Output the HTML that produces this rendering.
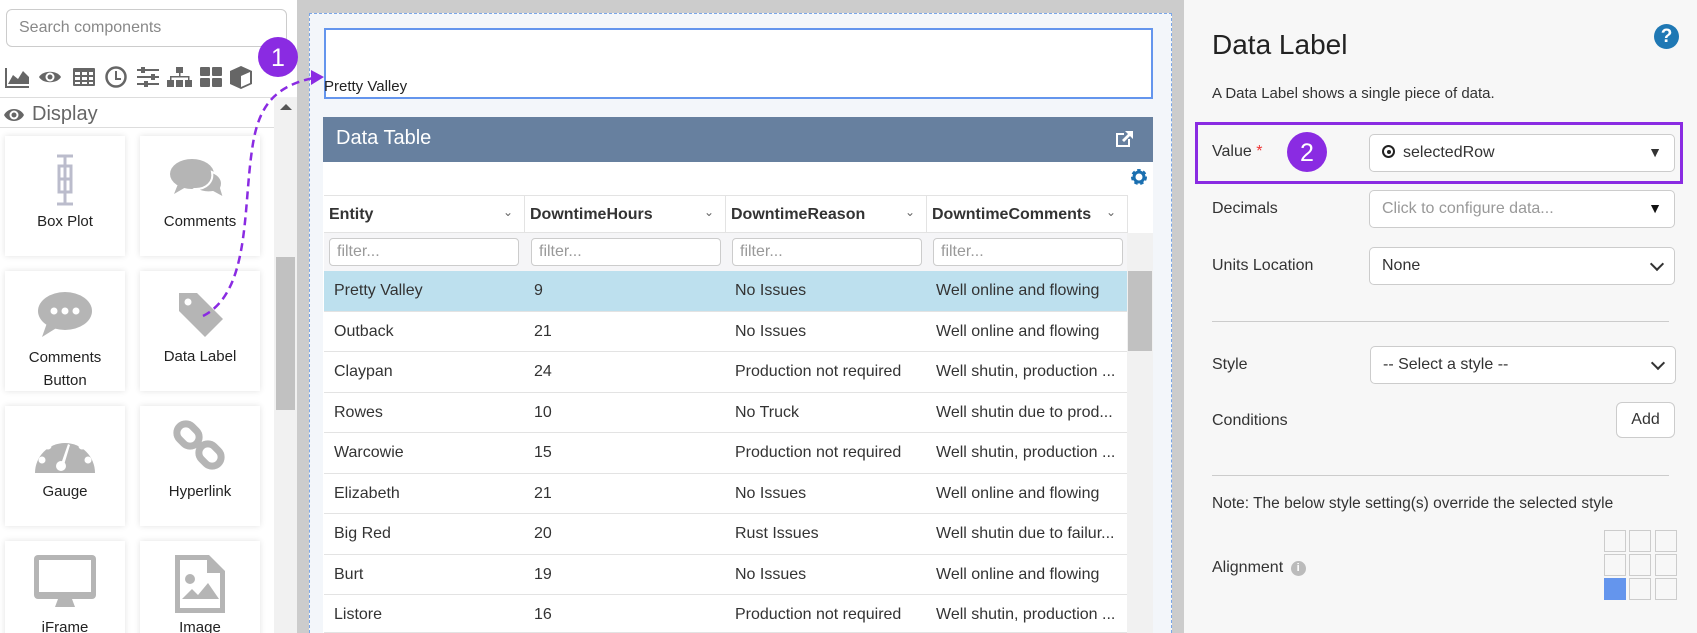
<!DOCTYPE html>
<html style="width:1697px;height:633px;overflow:hidden"><head><meta charset="utf-8"><style>
*{box-sizing:border-box;margin:0;padding:0}
body{width:1697px;height:633px;overflow:hidden;position:relative;font-family:"Liberation Sans",sans-serif;background:#ccc;color:#333}
.abs{position:absolute}
#left{left:0;top:0;width:297px;height:633px;background:#fff;overflow:hidden}
.tile{position:absolute;width:120px;height:120px;background:#fff;box-shadow:0 0 6px rgba(0,0,0,.12);text-align:center;font-size:15px;color:#222}
.tile .lb{position:absolute;left:0;right:0;top:74px;line-height:23px}
.tile svg{position:absolute;left:35px;top:18px}
#canvas{left:309px;top:13px;width:863px;height:620px;border:1px dashed #7aa6e8;border-bottom:none;background:#f3f6fa}
.row{position:absolute;left:324px;width:803px;height:40.5px;border-bottom:1px solid #e3e3e3;background:#fff;font-size:16px;color:#333}
.row span{position:absolute;top:11px;white-space:nowrap}
#right{left:1184px;top:0;width:513px;height:633px;background:#f7f7f7}
.lab{position:absolute;left:28px;font-size:16px;color:#333}
.sel{position:absolute;left:185px;width:306px;height:38px;background:#fff;border:1px solid #ccc;border-radius:5px;font-size:16px;padding:9px 12px;color:#333}
.sel .ar{position:absolute;right:12px;top:9px;font-size:14px}
.chev{position:absolute;right:12px;top:11px;width:10px;height:10px;border-right:2px solid #333;border-bottom:2px solid #333;transform:rotate(45deg)}
.fi{position:absolute;top:238px;height:28px;border:1px solid #ccc;border-radius:4px;background:#fff;font-size:16px;color:#999;padding:4px 7px}
.hd{position:absolute;top:206px;font-size:16px;font-weight:bold;color:#333}
.sc{position:absolute;top:205px;font-size:12px;color:#666}
.g{position:absolute;width:22px;height:22px;border:1px solid #ccc;background:#f7f7f7}
</style></head><body>

<div id="left" class="abs">
  <div class="abs" style="left:6px;top:9px;width:281px;height:38px;border:1px solid #ccc;border-radius:6px;font-size:16px;color:#888;padding:9px 12px">Search components</div>
  <svg class="abs" style="left:3px;top:64px" width="260" height="26" viewBox="0 0 260 26" fill="#666">
    <path d="M2 4v20h24v-2H4V4z M5 20 l5-9 5 4 5-8 6 6v7H5z"/>
    <path d="M36 13c4-7 18-7 22 0c-4 7-18 7-22 0z" /><circle cx="47" cy="13" r="4.5" fill="#fff"/><circle cx="47" cy="13" r="2.5"/>
    <rect x="70" y="4" width="22" height="18" rx="1"/><g fill="#fff"><rect x="72" y="8" width="5" height="3"/><rect x="79" y="8" width="5" height="3"/><rect x="86" y="8" width="4" height="3"/><rect x="72" y="13" width="5" height="3"/><rect x="79" y="13" width="5" height="3"/><rect x="86" y="13" width="4" height="3"/><rect x="72" y="18" width="5" height="2"/><rect x="79" y="18" width="5" height="2"/><rect x="86" y="18" width="4" height="2"/></g>
    <circle cx="113" cy="13" r="9.5" fill="none" stroke="#666" stroke-width="2.5"/><path d="M112 7h2v7h4v2h-6z"/>
    <rect x="134" y="5" width="22" height="2"/><rect x="134" y="12" width="22" height="2"/><rect x="134" y="19" width="22" height="2"/><rect x="138" y="3" width="4" height="6"/><rect x="148" y="10" width="4" height="6"/><rect x="141" y="17" width="4" height="6"/>
    <rect x="173" y="3" width="7" height="6"/><rect x="176" y="9" width="1.5" height="4"/><rect x="167" y="12" width="19" height="1.5"/><rect x="167" y="12" width="1.5" height="5"/><rect x="185" y="12" width="1.5" height="5"/><rect x="164" y="16" width="7" height="7"/><rect x="173" y="16" width="7" height="7"/><rect x="182" y="16" width="7" height="7"/>
    <rect x="197" y="3" width="10" height="9" rx="1"/><rect x="209" y="3" width="10" height="9" rx="1"/><rect x="197" y="14" width="10" height="9" rx="1"/><rect x="209" y="14" width="10" height="9" rx="1"/>
    <path d="M238 2l11 5v13l-11 5-11-5V7z"/><path d="M238 12l9-4v11l-9 4z M229 8l9 4" fill="#fff"/>
  </svg>
  <div class="abs" style="left:0;top:97px;width:274px;height:1px;background:#ddd"></div>
  <div class="abs" style="left:0;top:127px;width:274px;height:1px;background:#ddd"></div>
  <svg class="abs" style="left:3px;top:106px" width="22" height="18" viewBox="0 0 22 18"><path d="M1 9c4-8 16-8 20 0c-4 8-16 8-20 0z" fill="#666"/><circle cx="11" cy="9" r="4.5" fill="#fff"/><circle cx="11" cy="9" r="2.5" fill="#666"/></svg>
  <div class="abs" style="left:32px;top:103px;font-size:20px;color:#666">Display</div>
  <div class="abs" style="left:274px;top:97px;width:23px;height:536px;background:#f1f1f1"></div>
  <div class="abs" style="left:280px;top:104px;width:0;height:0;border-left:6px solid transparent;border-right:6px solid transparent;border-bottom:6px solid #555"></div>
  <div class="abs" style="left:276px;top:257px;width:19px;height:153px;background:#c1c1c1"></div>

  <div class="tile" style="left:5px;top:136px"><svg width="50" height="52" viewBox="0 0 50 52"><g fill="none" stroke="#bbbccc" stroke-width="3"><path d="M17 2h16M25 2v48M17 50h16"/><rect x="19" y="12" width="12" height="26"/><path d="M19 25h12"/></g></svg><div class="lb">Box Plot</div></div>
  <div class="tile" style="left:140px;top:136px"><svg width="60" height="52" viewBox="0 0 60 52" style="left:28px"><ellipse cx="24" cy="20" rx="22" ry="15" fill="#b5b5b5"/><path d="M10 30l-4 10 12-7z" fill="#b5b5b5"/><path d="M44 18c8 3 12 9 9 16l3 10-11-6c-6 1-12 0-17-3 10 0 18-7 16-17z" fill="#b5b5b5" stroke="#fff" stroke-width="2"/></svg><div class="lb">Comments</div></div>
  <div class="tile" style="left:5px;top:271px"><svg width="60" height="52" viewBox="0 0 60 52" style="left:30px"><ellipse cx="30" cy="22" rx="27" ry="19" fill="#b5b5b5"/><path d="M12 34l-5 14 16-10z" fill="#b5b5b5"/><circle cx="19" cy="22" r="3.5" fill="#fff"/><circle cx="30" cy="22" r="3.5" fill="#fff"/><circle cx="41" cy="22" r="3.5" fill="#fff"/></svg><div class="lb" style="top:75px">Comments<br>Button</div></div>
  <div class="tile" style="left:140px;top:271px"><svg width="52" height="52" viewBox="0 0 52 52"><path d="M4 4h18l26 26-18 18L4 22z" fill="#b5b5b5"/><circle cx="13" cy="13" r="3.5" fill="#fff"/></svg><div class="lb">Data Label</div></div>
  <div class="tile" style="left:5px;top:406px"><svg width="62" height="44" viewBox="0 0 62 44" style="left:29px;top:24px"><path d="M1 43A30 30 0 0 1 61 43z" fill="#b5b5b5"/><g fill="#fff"><circle cx="31" cy="9" r="3.5"/><circle cx="14" cy="16" r="3.5"/><circle cx="48" cy="16" r="3.5"/><circle cx="8" cy="30" r="3.5"/><circle cx="54" cy="30" r="3.5"/><circle cx="27" cy="36" r="5"/><path d="M34 14l2 1-6 20-3-1z"/></g></svg><div class="lb">Gauge</div></div>
  <div class="tile" style="left:140px;top:406px"><svg width="58" height="52" viewBox="0 0 58 52" style="left:32px;top:14px"><g fill="none" stroke="#b5b5b5" stroke-width="7"><rect x="4" y="6" width="24" height="18" rx="9" transform="rotate(45 16 15)"/><rect x="26" y="26" width="24" height="18" rx="9" transform="rotate(45 38 35)"/></g></svg><div class="lb">Hyperlink</div></div>
  <div class="tile" style="left:5px;top:541px"><svg width="66" height="56" viewBox="0 0 66 56" style="left:27px;top:12px"><rect x="2" y="2" width="62" height="44" rx="4" fill="#b5b5b5"/><rect x="7" y="7" width="52" height="32" fill="#fff"/><path d="M26 46h14l3 8H23z" fill="#b5b5b5"/></svg><div class="lb" style="top:75px">iFrame</div></div>
  <div class="tile" style="left:140px;top:541px"><svg width="54" height="62" viewBox="0 0 54 62" style="left:33px;top:12px"><path d="M2 2h34l16 16v42H2z" fill="#b5b5b5"/><path d="M7 7h27v13h13v35H7z" fill="#fff"/><circle cx="17" cy="26" r="5" fill="#b5b5b5"/><path d="M9 46l10-10 6 6 10-12 11 16z" fill="#b5b5b5"/></svg><div class="lb" style="top:75px">Image</div></div>
</div>

<div id="canvas" class="abs"></div>
<div class="abs" style="left:324px;top:28px;width:829px;height:71px;background:#fff;border:2px solid #6495ed"></div>
<div class="abs" style="left:324px;top:78px;font-size:15px;color:#222">Pretty Valley</div>

<div class="abs" style="left:323px;top:117px;width:830px;height:45px;background:#67809f"></div>
<div class="abs" style="left:336px;top:127px;font-size:20px;color:#fff">Data Table</div>
<svg class="abs" style="left:1113px;top:129px" width="22" height="20" viewBox="0 0 22 20"><path d="M3 4h8v2H5v10h10v-6h2v8H3z" fill="#fff"/><path d="M12 2h8v8l-3-3-6 6-2-2 6-6z" fill="#fff"/></svg>
<div class="abs" style="left:323px;top:162px;width:830px;height:471px;background:#fff"></div>
<svg class="abs" style="left:1130px;top:168px" width="18" height="18" viewBox="0 0 18 18"><circle cx="9" cy="9" r="6" fill="none" stroke="#1a6fb0" stroke-width="4" stroke-dasharray="3 2.3"/><circle cx="9" cy="9" r="5" fill="none" stroke="#1a6fb0" stroke-width="3"/></svg>
<div class="abs" style="left:324px;top:195px;width:803px;height:38px;border-top:1px solid #e3e3e3;border-bottom:1px solid #e3e3e3;background:#fff"></div>
<div class="abs" style="left:524px;top:195px;width:1px;height:38px;background:#e3e3e3"></div>
<div class="abs" style="left:725px;top:195px;width:1px;height:38px;background:#e3e3e3"></div>
<div class="abs" style="left:926px;top:195px;width:1px;height:38px;background:#e3e3e3"></div>
<div class="abs" style="left:1127px;top:195px;width:1px;height:38px;background:#e3e3e3"></div>
<div class="hd" style="left:329px">Entity</div><div class="sc" style="left:503px">&#8964;</div>
<div class="hd" style="left:530px">DowntimeHours</div><div class="sc" style="left:704px">&#8964;</div>
<div class="hd" style="left:731px">DowntimeReason</div><div class="sc" style="left:905px">&#8964;</div>
<div class="hd" style="left:932px">DowntimeComments</div><div class="sc" style="left:1106px">&#8964;</div>
<div class="abs" style="left:324px;top:233px;width:803px;height:38px;background:#f5f5f7"></div>
<div class="fi" style="left:329px;width:190px">filter...</div>
<div class="fi" style="left:531px;width:190px">filter...</div>
<div class="fi" style="left:732px;width:190px">filter...</div>
<div class="fi" style="left:933px;width:190px">filter...</div>
<div class="abs" style="left:1127px;top:233px;width:26px;height:400px;background:#f1f1f1"></div>
<div class="abs" style="left:1128px;top:271px;width:24px;height:80px;background:#c1c1c1"></div>

<div class="row" style="top:271px;background:#bde0ee"><span style="left:10px">Pretty Valley</span><span style="left:210px">9</span><span style="left:411px">No Issues</span><span style="left:612px">Well online and flowing</span></div>
<div class="row" style="top:311.5px"><span style="left:10px">Outback</span><span style="left:210px">21</span><span style="left:411px">No Issues</span><span style="left:612px">Well online and flowing</span></div>
<div class="row" style="top:352px"><span style="left:10px">Claypan</span><span style="left:210px">24</span><span style="left:411px">Production not required</span><span style="left:612px">Well shutin, production ...</span></div>
<div class="row" style="top:392.5px"><span style="left:10px">Rowes</span><span style="left:210px">10</span><span style="left:411px">No Truck</span><span style="left:612px">Well shutin due to prod...</span></div>
<div class="row" style="top:433px"><span style="left:10px">Warcowie</span><span style="left:210px">15</span><span style="left:411px">Production not required</span><span style="left:612px">Well shutin, production ...</span></div>
<div class="row" style="top:473.5px"><span style="left:10px">Elizabeth</span><span style="left:210px">21</span><span style="left:411px">No Issues</span><span style="left:612px">Well online and flowing</span></div>
<div class="row" style="top:514px"><span style="left:10px">Big Red</span><span style="left:210px">20</span><span style="left:411px">Rust Issues</span><span style="left:612px">Well shutin due to failur...</span></div>
<div class="row" style="top:554.5px"><span style="left:10px">Burt</span><span style="left:210px">19</span><span style="left:411px">No Issues</span><span style="left:612px">Well online and flowing</span></div>
<div class="row" style="top:595px;height:38px"><span style="left:10px">Listore</span><span style="left:210px">16</span><span style="left:411px">Production not required</span><span style="left:612px">Well shutin, production ...</span></div>

<div id="right" class="abs">
  <div class="abs" style="left:28px;top:29px;font-size:28px;color:#222">Data Label</div>
  <div class="abs" style="left:470px;top:24px;width:25px;height:25px;border-radius:50%;background:#1f78b4;color:#fff;font-weight:bold;font-size:19px;text-align:center;line-height:25px">?</div>
  <div class="lab" style="top:85px;font-size:15px">A Data Label shows a single piece of data.</div>
  <div class="abs" style="left:11px;top:122px;width:488px;height:62px;border:3px solid #8a2be2"></div>
  <div class="lab" style="top:143px">Value <span style="color:#e33">*</span></div>
  <div class="sel" style="top:134px"><span style="display:inline-block;width:13px;height:13px;border:2px solid #222;border-radius:50%;vertical-align:-1px;position:relative;margin-right:8px"><span style="position:absolute;left:2.5px;top:2.5px;width:4px;height:4px;border-radius:50%;background:#222"></span></span>selectedRow<span class="ar">&#9660;</span></div>
  <div class="lab" style="top:200px">Decimals</div>
  <div class="sel" style="top:190px;color:#999">Click to configure data...<span class="ar" style="color:#111">&#9660;</span></div>
  <div class="lab" style="top:257px">Units Location</div>
  <div class="sel" style="top:247px">None<span class="chev"></span></div>
  <div class="abs" style="left:28px;top:321px;width:457px;height:1px;background:#ccc"></div>
  <div class="lab" style="top:356px">Style</div>
  <div class="sel" style="top:346px;left:186px">-- Select a style --<span class="chev"></span></div>
  <div class="lab" style="top:412px">Conditions</div>
  <div class="abs" style="left:432px;top:402px;width:59px;height:36px;background:#fff;border:1px solid #ccc;border-radius:6px;font-size:16px;text-align:center;line-height:34px">Add</div>
  <div class="abs" style="left:28px;top:475px;width:457px;height:1px;background:#ccc"></div>
  <div class="lab" style="top:495px;font-size:15.5px">Note: The below style setting(s) override the selected style</div>
  <div class="lab" style="top:559px">Alignment <span style="display:inline-block;width:15px;height:15px;border-radius:50%;background:#bbb;color:#fff;font-size:11px;font-weight:bold;text-align:center;line-height:15px;vertical-align:1px;margin-left:3px">i</span></div>
  <div class="g" style="left:420px;top:530px"></div><div class="g" style="left:445px;top:530px"></div><div class="g" style="left:471px;top:530px"></div>
  <div class="g" style="left:420px;top:554px"></div><div class="g" style="left:445px;top:554px"></div><div class="g" style="left:471px;top:554px"></div>
  <div class="g" style="left:420px;top:578px;background:#6495ed;border-color:#6495ed"></div><div class="g" style="left:445px;top:578px"></div><div class="g" style="left:471px;top:578px"></div>
</div>

<svg class="abs" style="left:0;top:0" width="1697" height="633">
  <path d="M203 316 C 250 292 243 210 252 150 C 258 105 275 85 318 77" fill="none" stroke="#8a2be2" stroke-width="2.5" stroke-dasharray="8 5"/>
  <path d="M311 70 L324 77 L311 85z" fill="#8a2be2"/>
  <circle cx="278" cy="57" r="20" fill="#8a2be2"/>
  <text x="278" y="66" text-anchor="middle" font-family="Liberation Sans, sans-serif" font-size="25" fill="#fff">1</text>
  <circle cx="1307" cy="152" r="20" fill="#8a2be2"/>
  <text x="1307" y="161" text-anchor="middle" font-family="Liberation Sans, sans-serif" font-size="25" fill="#fff">2</text>
</svg>
</body></html>
